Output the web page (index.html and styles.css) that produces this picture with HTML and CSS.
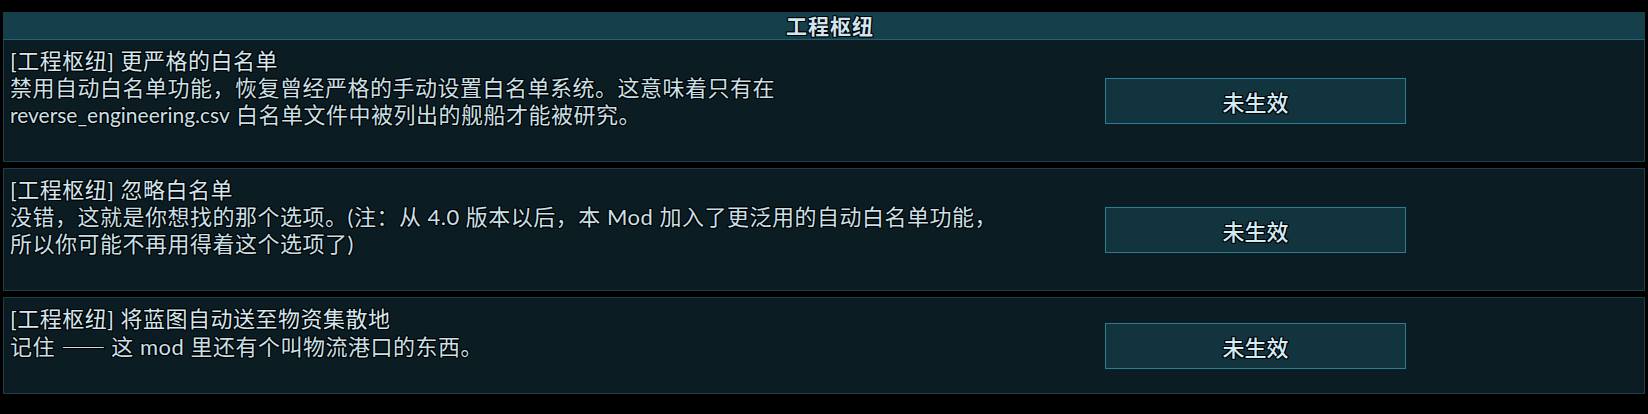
FILE: index.html
```html
<!DOCTYPE html>
<html lang="zh-CN">
<head>
<meta charset="utf-8">
<title>工程枢纽</title>
<link rel="stylesheet" href="styles.css">
</head>
<body>
<main class="settings">
  <header class="section-title">工程枢纽</header>
  <div class="options">
    <section class="option">
      <div class="option-text">
        <h3 class="option-name">[工程枢纽] 更严格的白名单</h3>
        <p class="option-desc">禁用自动白名单功能，恢复曾经严格的手动设置白名单系统。这意味着只有在<br><span class="latin">reverse_engineering.csv</span> 白名单文件中被列出的舰船才能被研究。</p>
      </div>
      <button class="toggle" type="button">未生效</button>
    </section>
    <section class="option">
      <div class="option-text">
        <h3 class="option-name">[工程枢纽] 忽略白名单</h3>
        <p class="option-desc">没错，这就是你想找的那个选项。(注：从 4.0 版本以后，本 Mod 加入了更泛用的自动白名单功能，<br>所以你可能不再用得着这个选项了)</p>
      </div>
      <button class="toggle" type="button">未生效</button>
    </section>
    <section class="option">
      <div class="option-text">
        <h3 class="option-name">[工程枢纽] 将蓝图自动送至物资集散地</h3>
        <p class="option-desc">记住 <span class="dash">——</span> 这 mod 里还有个叫物流港口的东西。</p>
      </div>
      <button class="toggle" type="button">未生效</button>
    </section>
  </div>
</main>
</body>
</html>
```

FILE: styles.css
```css
* {
  box-sizing: border-box;
}

html,
body {
  margin: 0;
  background: #000;
}

body {
  padding: 12px 3px 0 3px;
  font-family: "Lato", "Noto Sans CJK SC", sans-serif;
  font-size: 22px;
  color: #c9e0ea;
}

.settings {
  display: flex;
  flex-direction: column;
}

/* dark outline drawn round every glyph */
.section-title,
.option-name,
.option-desc,
.toggle {
  text-shadow:
    -1px 0 #000, 1px 0 #000, 0 -1px #000, 0 1px #000,
    -1px -1px #000, 1px 1px #000, -1px 1px #000, 1px -1px #000;
}

.section-title {
  height: 28px;
  padding-left: 12px;
  background: #163f4c;
  border-bottom: 1px solid #24606f;
  font-family: "Noto Sans CJK SC", sans-serif;
  font-weight: 700;
  font-size: 21px;
  line-height: 27px;
  text-align: center;
  letter-spacing: 1px;
  color: #cfe6f0;
}

.options {
  display: flex;
  flex-direction: column;
  gap: 6px;
}

.option {
  display: flex;
  align-items: center;
  background: #0c1c23;
  border: 1px solid #1b3e4a;
}

.options .option:first-child {
  border-top: none;
}

.option-text {
  flex: 1;
  align-self: flex-start;
  padding: 7px 6px 33px 6px;
  line-height: 27px;
  white-space: nowrap;
  letter-spacing: 0.5px;
}

.option-name,
.option-desc {
  margin: 0;
  font-size: 22px;
  font-weight: 400;
}

.option-name {
  color: #d3e7f0;
}

.latin {
  font-size: 21px;
  letter-spacing: 0;
}

.dash {
  font-family: "Noto Sans CJK SC", sans-serif;
  letter-spacing: 0;
}

.toggle {
  width: 301px;
  height: 46px;
  margin-right: 238px;
  padding: 0;
  background: #12343f;
  border: 1px solid #2a7f96;
  font-family: "Noto Sans CJK SC", sans-serif;
  font-size: 22px;
  font-weight: 500;
  color: #d2ecf7;
  cursor: pointer;
}
```
